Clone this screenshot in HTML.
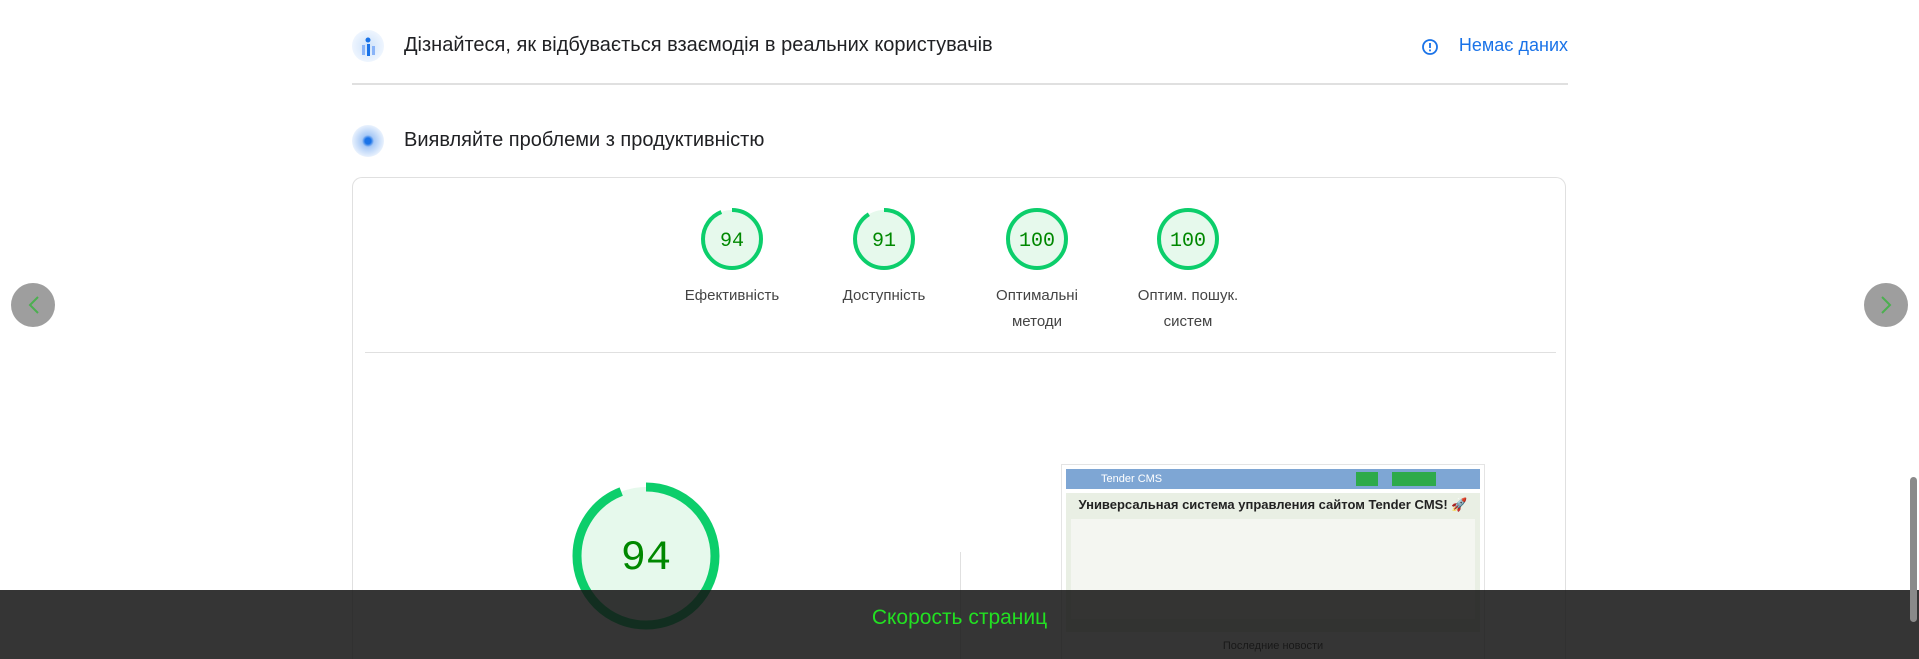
<!DOCTYPE html><html style="height:659px;overflow:hidden"><head><meta charset="utf-8"><style>
html,body{margin:0;width:1919px;height:659px;overflow:hidden;background:#fff}
body{font-family:"Liberation Sans",Arial,sans-serif}
#w{position:relative;width:1919px;height:659px;overflow:hidden}
.a{position:absolute}
.h{font-size:20px;color:#202124}
.g{text-align:center;width:140px;font-size:15px;color:#444;line-height:26px}
</style></head><body><div id="w">
<div class="a" style="left:352px;top:30px;width:32px;height:32px;border-radius:50%;background:radial-gradient(#cfe3fb,#eef5fe 70%,transparent)"></div>
<svg class="a" style="left:358px;top:34px" width="20" height="26"><circle cx="10" cy="6" r="2.5" fill="#1a73e8"/><rect x="4" y="11" width="3" height="10" fill="#8ab4f8"/><rect x="9" y="10" width="3" height="12" fill="#1a73e8"/><rect x="14" y="12" width="3" height="9" fill="#8ab4f8"/></svg>
<div class="a h" style="left:404px;top:34px">Дізнайтеся, як відбувається взаємодія в реальних користувачів</div>
<svg class="a" style="left:1421px;top:38px" width="18" height="18"><circle cx="9" cy="9" r="7" fill="none" stroke="#1a73e8" stroke-width="1.8"/><rect x="8.1" y="5" width="1.8" height="5" fill="#1a73e8"/><rect x="8.1" y="11.5" width="1.8" height="1.8" fill="#1a73e8"/></svg>
<div class="a" style="right:351px;top:35px;font-size:18px;color:#1a73e8">Немає даних</div>
<div class="a" style="left:352px;top:83px;width:1216px;height:2px;background:#e0e0e0"></div>
<div class="a" style="left:352px;top:125px;width:32px;height:32px;border-radius:50%;background:radial-gradient(#1a73e8 0 3px,#a8c9f6 6px,#e8f1fd 70%,transparent)"></div>
<div class="a h" style="left:404px;top:129px">Виявляйте проблеми з продуктивністю</div>
<div class="a" style="left:352px;top:177px;width:1214px;height:482px;border:1px solid #e0e0e0;border-bottom:none;border-radius:10px 10px 0 0;box-sizing:border-box"></div>
<svg class="a" style="left:0;top:0" width="1919" height="659">
<g fill="#e6f9ec" stroke-width="4" >
<circle cx="732" cy="239" r="29" stroke="#0cce6b" stroke-dasharray="171 182" transform="rotate(-90 732 239)"/>
<circle cx="884" cy="239" r="29" stroke="#0cce6b" stroke-dasharray="166 182" transform="rotate(-90 884 239)"/>
<circle cx="1037" cy="239" r="29" stroke="#0cce6b"/>
<circle cx="1188" cy="239" r="29" stroke="#0cce6b"/>
<circle cx="646" cy="556" r="69" stroke="#0cce6b" stroke-width="9" stroke-dasharray="408 434" transform="rotate(-90 646 556)"/>
</g>
<g font-family="Liberation Mono,monospace" fill="#008800" text-anchor="middle" font-size="20">
<text x="732" y="246">94</text><text x="884" y="246">91</text><text x="1037" y="246">100</text><text x="1188" y="246">100</text>
<text x="646" y="569" font-size="42">94</text></g>
<line x1="960.5" y1="552" x2="960.5" y2="659" stroke="#e0e0e0"/>
</svg>
<div class="a g" style="left:662px;top:283px">Ефективність</div>
<div class="a g" style="left:814px;top:283px">Доступність</div>
<div class="a g" style="left:967px;top:283px">Оптимальні<br>методи</div>
<div class="a g" style="left:1118px;top:283px">Оптим. пошук.<br>систем</div>
<div class="a" style="left:365px;top:352px;width:1191px;height:1px;background:#e0e0e0"></div>
<div class="a" style="left:1061px;top:464px;width:424px;height:195px;border:1px solid #e4e4e4;border-bottom:none;background:#fff;box-sizing:border-box;overflow:hidden">
<div style="margin:4px;height:20px;background:#7ea6d4;color:#fff;font-size:11px;padding-left:35px;line-height:20px;position:relative">Tender CMS<span style="position:absolute;left:290px;top:3px;width:22px;height:14px;background:#2eaa4a"></span><span style="position:absolute;left:326px;top:3px;width:44px;height:14px;background:#2eaa4a"></span></div>
<div style="margin:0 4px;height:135px;background:#e9efe4;text-align:center;font-size:13px;font-weight:bold;color:#222;padding-top:4px;white-space:nowrap">Универсальная система управления сайтом Tender CMS! 🚀
<div style="margin:6px 5px;height:100px;background:#f4f6f1"></div></div>
<div style="text-align:center;font-size:11px;color:#333;margin-top:8px">Последние новости</div>
</div>
<div class="a" style="left:0;top:590px;width:1919px;height:69px;background:rgba(20,20,20,0.86)"></div>
<div class="a" style="left:0;top:606px;width:1919px;text-align:center;font-size:21px;color:#22e022">Скорость страниц</div>
<div class="a" style="left:11px;top:283px;width:44px;height:44px;border-radius:50%;background:#9e9e9e"></div>
<svg class="a" style="left:11px;top:283px" width="44" height="44"><path d="M27 14 L19 22 L27 30" fill="none" stroke="#4caf50" stroke-width="2"/></svg>
<div class="a" style="left:1864px;top:283px;width:44px;height:44px;border-radius:50%;background:#9e9e9e"></div>
<svg class="a" style="left:1864px;top:283px" width="44" height="44"><path d="M18 14 L26 22 L18 30" fill="none" stroke="#4caf50" stroke-width="2"/></svg>
<div class="a" style="left:1910px;top:477px;width:7px;height:145px;border-radius:4px;background:#8a8a8a"></div>
</div></body></html>
